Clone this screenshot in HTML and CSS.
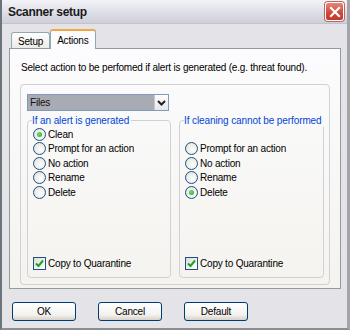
FILE: index.html
```html
<!DOCTYPE html>
<html>
<head>
    <title>Scanner setup</title>
    <link rel="stylesheet" href="styles.css">
</head>
<body>
    <div class="window">
        <div class="titlebar">
            <span class="title">Scanner setup</span>
            <span class="close">
                <svg width="12" height="12" viewBox="0 0 12 12">
                    <path d="M2 2 L10 10 M10 2 L2 10" stroke="#fff" stroke-width="2.2" stroke-linecap="square"/>
                </svg>
            </span>
        </div>

        <div class="body">
            <div class="tabs">
                <div class="tab">Setup</div>
                <div class="tab active">Actions</div>
            </div>

            <div class="panel">
                <p class="intro">Select action to be perfomed if alert is generated (e.g. threat found).</p>

                <div class="frame">
                    <div class="combo">
                        <span class="combo-value">Files</span>
                        <span class="combo-arrow">
                            <svg width="9" height="6" viewBox="0 0 9 6">
                                <path d="M1 1 L4.5 4.5 L8 1" fill="none" stroke="#222" stroke-width="2"/>
                            </svg>
                        </span>
                    </div>

                    <div class="groups">
                        <fieldset class="group">
                            <legend>If an alert is generated</legend>
                            <label class="radio checked"><span class="dot"></span>Clean</label>
                            <label class="radio"><span class="dot"></span>Prompt for an action</label>
                            <label class="radio"><span class="dot"></span>No action</label>
                            <label class="radio"><span class="dot"></span>Rename</label>
                            <label class="radio"><span class="dot"></span>Delete</label>
                            <label class="check">
                                <span class="box">
                                    <svg width="9" height="9" viewBox="0 0 9 9">
                                        <path d="M1 4.5 L3.5 7 L8 1.5" fill="none" stroke="#21a121" stroke-width="2"/>
                                    </svg>
                                </span>Copy to Quarantine
                            </label>
                        </fieldset>

                        <fieldset class="group">
                            <legend>If cleaning cannot be performed</legend>
                            <div class="spacer"></div>
                            <label class="radio"><span class="dot"></span>Prompt for an action</label>
                            <label class="radio"><span class="dot"></span>No action</label>
                            <label class="radio"><span class="dot"></span>Rename</label>
                            <label class="radio checked"><span class="dot"></span>Delete</label>
                            <label class="check">
                                <span class="box">
                                    <svg width="9" height="9" viewBox="0 0 9 9">
                                        <path d="M1 4.5 L3.5 7 L8 1.5" fill="none" stroke="#21a121" stroke-width="2"/>
                                    </svg>
                                </span>Copy to Quarantine
                            </label>
                        </fieldset>
                    </div>
                </div>
            </div>

            <div class="buttons">
                <button class="btn">OK</button>
                <button class="btn">Cancel</button>
                <button class="btn">Default</button>
            </div>
        </div>
    </div>
</body>
</html>
```

FILE: styles.css
```css
html, body {
    margin: 0;
    padding: 0;
}
body {
    width: 350px;
    height: 330px;
    overflow: hidden;
    font-family: "Liberation Sans", Arial, sans-serif;
    font-size: 10px;
    letter-spacing: -0.2px;
    color: #000;
    background-color: #e4e3e8;
}
.window {
    box-sizing: border-box;
    width: 350px;
    height: 330px;
    border-left: 2px solid #6b7479;
    border-right: 3px solid #a4a4ab;
    border-bottom: 2px solid #8c8c94;
    background-color: #e4e3e8;
}
.titlebar {
    height: 24px;
    display: flex;
    align-items: center;
    justify-content: space-between;
    padding: 0 3px 0 6px;
    background: linear-gradient(#f3f3f7, #dcdce6 60%, #cfcfdc);
    border-bottom: 1px solid #c2c2cc;
    box-sizing: border-box;
}
.title {
    font-size: 12px;
    font-weight: bold;
    letter-spacing: -0.3px;
    color: #1a1a1a;
}
.close {
    width: 17px;
    height: 17px;
    display: flex;
    align-items: center;
    justify-content: center;
    border: 1px solid #fff;
    border-radius: 3px;
    background: linear-gradient(#e9857a, #d0473a 60%, #c23a2e);
    box-shadow: 0 0 0 1px #b86a62;
}
.body {
    padding: 5px 0 0 7px;
}
.tabs {
    display: flex;
    align-items: flex-end;
    padding-left: 2px;
    height: 19px;
    position: relative;
    z-index: 1;
}
.tab {
    height: 16px;
    box-sizing: border-box;
    padding: 3px 6px 0 6px;
    border: 1px solid #91a7b4;
    border-bottom: none;
    border-radius: 3px 3px 0 0;
    background: linear-gradient(#ffffff, #ecebe6);
    color: #000;
}
.tab.active {
    height: 20px;
    margin-bottom: -1px;
    padding: 4px 6px 0 6px;
    border-top: 2px solid #f2a53a;
    background: #fcfcfe;
}
.panel {
    box-sizing: border-box;
    width: 332px;
    height: 241px;
    border: 1px solid #919b9c;
    background: linear-gradient(#fcfcfe, #f4f3ee);
    padding: 12px 10px 0 10px;
}
.intro {
    margin: 0 0 10px 0;
    height: 13px;
    line-height: 13px;
    padding-left: 1px;
    white-space: nowrap;
}
.frame {
    box-sizing: border-box;
    width: 310px;
    height: 201px;
    border: 1px solid #d0d0d6;
    border-radius: 4px;
    padding: 9px 6px 0 6px;
}
.combo {
    width: 142px;
    height: 17px;
    display: flex;
    box-sizing: border-box;
    border: 1px solid #7f9db9;
    background-color: #a9abb4;
}
.combo-value {
    flex: 1;
    padding-left: 2px;
    line-height: 15px;
    color: #111;
}
.combo-arrow {
    width: 13px;
    display: flex;
    align-items: center;
    justify-content: center;
    background: linear-gradient(#ffffff, #e6e6ea);
    border-left: 1px solid #c5c5cc;
}
.groups {
    display: grid;
    grid-template-columns: 144px 145px;
    column-gap: 8px;
    margin-top: 3px;
}
.group {
    display: flex;
    flex-direction: column;
    height: 164px;
    box-sizing: border-box;
    margin: 0;
    padding: 0 5px 6px 5px;
    border: 1px solid #d0d0d6;
    border-radius: 4px;
    min-width: 0;
}
.group legend {
    color: #0046d5;
    font-size: 10px;
    letter-spacing: -0.1px;
    margin-left: -1px;
    padding: 0 2px 0 0;
    line-height: 13px;
    white-space: nowrap;
}
.spacer {
    height: 14.5px;
}
.radio, .check {
    display: flex;
    align-items: center;
    height: 14.5px;
    white-space: nowrap;
}
.dot {
    width: 11px;
    height: 11px;
    border: 1px solid #1c5180;
    border-radius: 50%;
    background: radial-gradient(circle at 60% 60%, #ffffff, #dcdcd6);
    margin-right: 2px;
    display: flex;
    align-items: center;
    justify-content: center;
    flex-shrink: 0;
}
.radio.checked .dot::after {
    content: "";
    width: 5px;
    height: 5px;
    border-radius: 50%;
    background: radial-gradient(circle at 40% 40%, #6ee06e, #21a121);
}
.check {
    margin-top: auto;
}
.box {
    width: 11px;
    height: 11px;
    border: 1px solid #1c5180;
    background: linear-gradient(135deg, #dcdcd6, #ffffff);
    margin-right: 2px;
    display: flex;
    align-items: center;
    justify-content: center;
    flex-shrink: 0;
}
.buttons {
    display: flex;
    gap: 22px;
    margin-top: 13px;
    padding-left: 3px;
}
.btn {
    width: 64px;
    height: 19px;
    padding: 0;
    font-family: inherit;
    font-size: 10px;
    letter-spacing: -0.2px;
    color: #000;
    border: 1px solid #003c74;
    border-radius: 3px;
    background: linear-gradient(#ffffff, #f2f2f0 70%, #d6d0c5);
}
```
